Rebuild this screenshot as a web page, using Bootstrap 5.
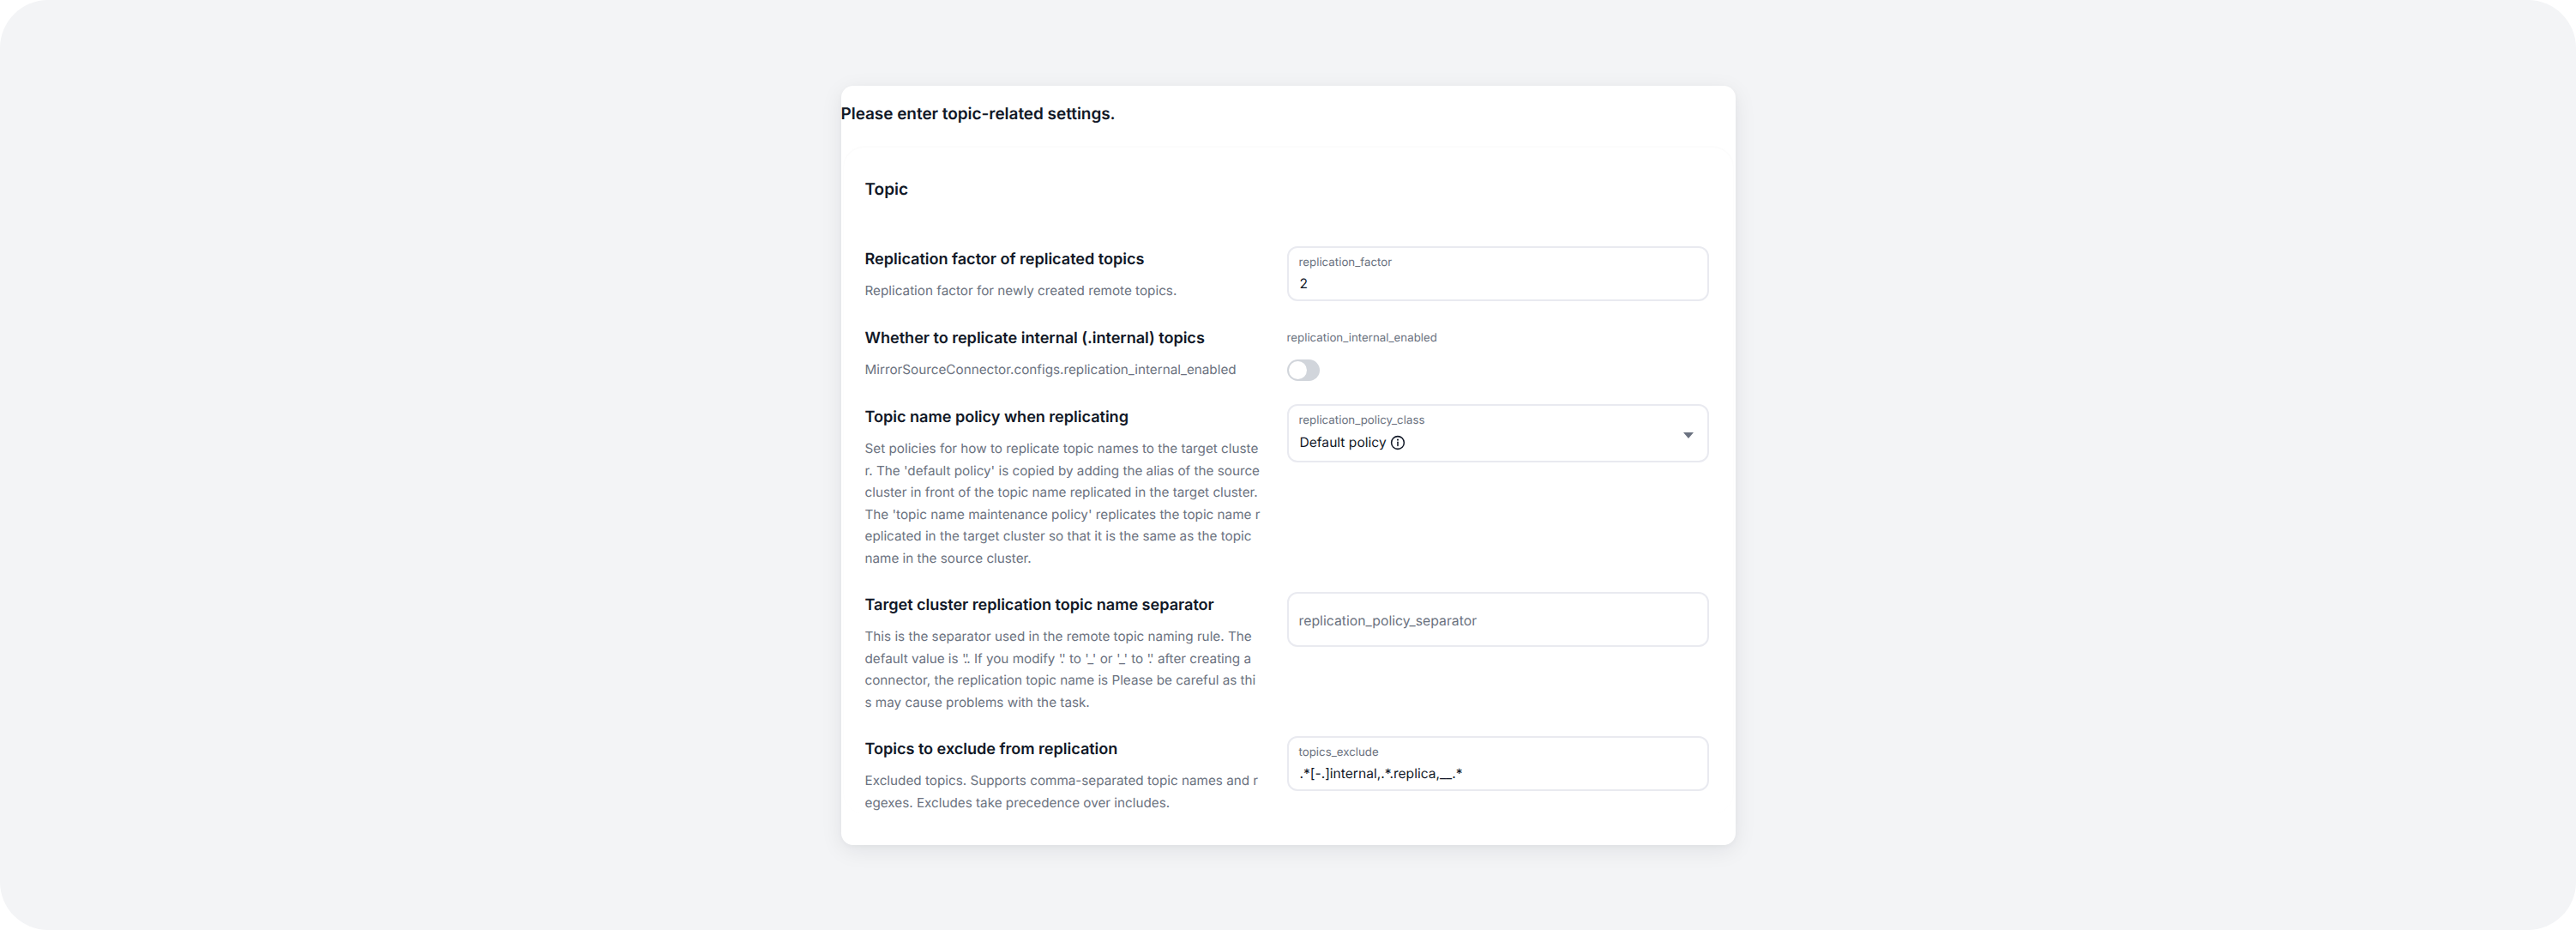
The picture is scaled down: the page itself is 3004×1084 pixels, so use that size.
<!DOCTYPE html>
<html lang="en"><head><meta charset="utf-8"><title>Topic settings</title>
<link href="https://cdn.jsdelivr.net/npm/bootstrap@5.3.0/dist/css/bootstrap.min.css" rel="stylesheet">
<style>
html,body{height:100%;margin:0;background:#fff}
body{font-family:Inter,"Liberation Sans",sans-serif;color:#111827;text-rendering:geometricPrecision}
.stage{height:1084px;background:#f3f4f6;border-radius:56px;padding-top:100px}
.panel{width:1043px;height:885px;background:#fff;border:0;border-radius:14px;box-shadow:0 6px 26px rgba(17,24,39,.08),0 2px 6px rgba(17,24,39,.03)}
.panel-title{font-size:19px;font-weight:600;line-height:24px;height:72px;padding-top:21px;margin:0;letter-spacing:-.05px}
.panel-inner{border-radius:24px;margin:0 3px;padding:0 30px 0 25px;box-shadow:0 -1px 3px rgba(17,24,39,.028)}
.sec-title{font-size:19px;font-weight:600;line-height:24px;padding-top:37px;height:115px;margin:0}
.cfg{display:grid;grid-template-columns:463px 492px;column-gap:29px}
.cfg-h{font-size:18.15px;font-weight:600;line-height:28px;margin:1px 0 10px;letter-spacing:-.05px}
.cfg-d{font-size:15.25px;line-height:25.6px;color:#6b7280;margin:0;word-break:break-all}
.one-line{display:block;white-space:nowrap}
.tq{letter-spacing:-1.5px;margin-right:1.5px}
.r1{height:92px}.r2{height:92px}.r3{height:219px}.r4{height:168px}.r5{height:auto}
.fld{border:2px solid #e9eaf0;border-radius:12px;padding:7px 12px 0 12px;height:64px;background:#fff}
.fld.tall{height:68px;position:relative}
.fld.mid{display:flex;align-items:center;padding:4px 12px 0}
.fld-l{display:block;font-size:13.3px;line-height:20px;color:#6b7280}
.fld-v{display:block;font-size:15.6px;line-height:24px;color:#111827;padding:3px 0 0 1px}
.fld.tall .fld-v{padding-top:4px}
.fld-p{font-size:15.8px;color:#6b7280}
.sw-l{font-size:13.3px;line-height:20px;color:#6b7280;margin-top:5px;margin-bottom:15px}
.swbox{width:38px;height:25px;border-radius:13px;background:#d1d5db;padding:2px;border:0}
.swknob{width:21px;height:21px;border-radius:50%;background:#fff}
.caret{position:absolute;right:16px;top:31px;width:0;height:0;border-left:6.5px solid transparent;border-right:6.5px solid transparent;border-top:7px solid #6b7280}
.info{width:18px;height:18px;vertical-align:-4px}
</style></head><body>
<main class="stage">
<section class="card panel mx-auto">
<h1 class="panel-title">Please enter topic-related settings.</h1>
<div class="panel-inner">
<h2 class="sec-title">Topic</h2>
<div class="cfg r1"><div><h3 class="cfg-h">Replication factor of replicated topics</h3><p class="cfg-d">Replication factor for newly created remote topics.</p></div>
<div><div class="fld"><span class="fld-l">replication_factor</span><span class="fld-v">2</span></div></div></div>
<div class="cfg r2"><div><h3 class="cfg-h">Whether to replicate internal (.internal) topics</h3><p class="cfg-d">MirrorSourceConnector.configs.replication_internal_enabled</p></div>
<div><div class="sw-l">replication_internal_enabled</div><div class="swbox"><div class="swknob"></div></div></div></div>
<div class="cfg r3"><div><h3 class="cfg-h">Topic name policy when replicating</h3><p class="cfg-d">Set policies for how to replicate topic names to the target cluster. The 'default policy' is copied by adding the alias of the source cluster in front of the topic name replicated in the target cluster. The 'topic name maintenance policy' replicates the topic name replicated in the target cluster so that it is the same as the topic name in the source cluster.</p></div>
<div><div class="fld tall"><span class="fld-l">replication_policy_class</span><span class="fld-v">Default policy <svg class="info" viewBox="0 0 20 20" fill="none" stroke="#111827" stroke-width="1.7" stroke-linecap="round"><circle cx="10" cy="10" r="8.2"/><path d="M10 9.2v4.6"/><path d="M10 6.2v.1" stroke-width="2.2"/></svg></span><span class="caret"></span></div></div></div>
<div class="cfg r4"><div><h3 class="cfg-h">Target cluster replication topic name separator</h3><p class="cfg-d"><span class="one-line">This is the separator used in the remote topic naming rule. The</span><span class="one-line">default value is <span class="tq">'.'.</span> If you modify <span class="tq">'.'</span> to <span class="tq">'_'</span> or <span class="tq">'_'</span> to <span class="tq">'.'</span> after creating a</span><span class="d-block">connector, the replication topic name is Please be careful as this may cause problems with the task.</span></p></div>
<div><div class="fld mid"><span class="fld-p">replication_policy_separator</span></div></div></div>
<div class="cfg r5"><div><h3 class="cfg-h">Topics to exclude from replication</h3><p class="cfg-d">Excluded topics. Supports comma-separated topic names and regexes. Excludes take precedence over includes.</p></div>
<div><div class="fld"><span class="fld-l">topics_exclude</span><span class="fld-v">.*[-.]internal,.*.replica,__.*</span></div></div></div>
</div>
</section>
</main>
<script src="https://cdn.jsdelivr.net/npm/bootstrap@5.3.0/dist/js/bootstrap.bundle.min.js"></script>
</body></html>
